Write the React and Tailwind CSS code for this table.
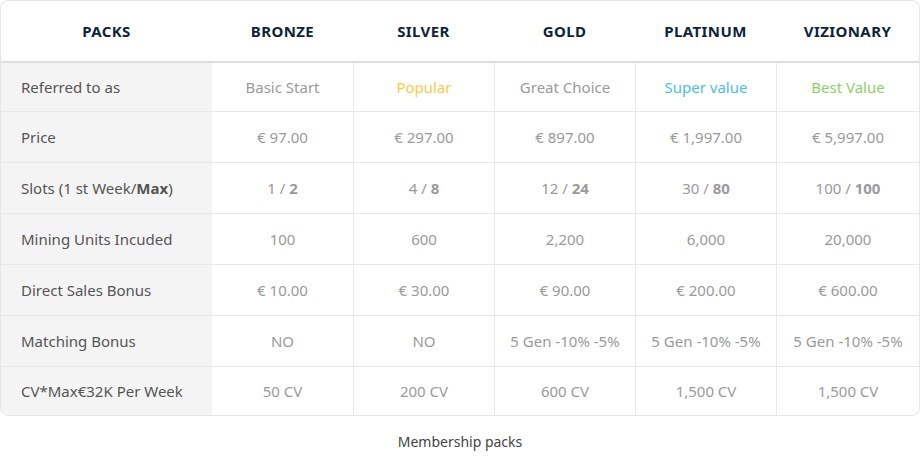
import React from "react";

const headers = ["PACKS", "BRONZE", "SILVER", "GOLD", "PLATINUM", "VIZIONARY"];

const B = ({ children }) => <span className="font-bold">{children}</span>;

const rows = [
  {
    label: "Referred to as",
    cells: [
      <span className="text-[#9a9a9a]">Basic Start</span>,
      <span className="text-[#fcc94b]">Popular</span>,
      <span className="text-[#9a9a9a]">Great Choice</span>,
      <span className="text-[#4cc0ea]">Super value</span>,
      <span className="text-[#8cd168]">Best Value</span>,
    ],
  },
  { label: "Price", cells: ["€ 97.00", "€ 297.00", "€ 897.00", "€ 1,997.00", "€ 5,997.00"] },
  {
    label: (
      <span>
        Slots (1 st Week/<B>Max</B>)
      </span>
    ),
    cells: [
      <span>1 / <B>2</B></span>,
      <span>4 / <B>8</B></span>,
      <span>12 / <B>24</B></span>,
      <span>30 / <B>80</B></span>,
      <span>100 / <B>100</B></span>,
    ],
  },
  { label: "Mining Units Incuded", cells: ["100", "600", "2,200", "6,000", "20,000"] },
  { label: "Direct Sales Bonus", cells: ["€ 10.00", "€ 30.00", "€ 90.00", "€ 200.00", "€ 600.00"] },
  { label: "Matching Bonus", cells: ["NO", "NO", "5 Gen -10% -5%", "5 Gen -10% -5%", "5 Gen -10% -5%"] },
  { label: "CV*Max€32K Per Week", cells: ["50 CV", "200 CV", "600 CV", "1,500 CV", "1,500 CV"], last: true },
];

export default function App() {
  return (
    <div
      className="w-[920px] h-[466px] bg-white"
      style={{ fontFamily: '"Noto Sans", "Open Sans", Arial, sans-serif' }}
    >
      <div className="border border-[#e6e6e6] rounded-[8px] overflow-hidden bg-white">
        <div className="grid grid-cols-[211px_141px_141px_141px_141px_1fr] h-[60px] border-b-2 border-[#dedede] box-content">
          {headers.map((h, i) => (
            <div
              key={i}
              className="flex items-center justify-center text-[15px] font-bold tracking-[0.4px] text-[#0e2338]"
            >
              {h}
            </div>
          ))}
        </div>
        {rows.map((r, ri) => (
          <div
            key={ri}
            className={`grid grid-cols-[211px_141px_141px_141px_141px_1fr] ${
              r.last ? "h-[48px]" : ri === 0 ? "h-[49px] border-b border-[#e8e8e8]" : "h-[51px] border-b border-[#e8e8e8]"
            }`}
          >
            <div className="bg-[#f4f4f4] flex items-center pl-5 text-[15px] text-[#555]">
              {r.label}
            </div>
            {r.cells.map((c, ci) => (
              <div
                key={ci}
                className={`flex items-center justify-center text-[15px] text-[#9a9a9a] ${
                  ci > 0 ? "border-l border-[#e8e8e8]" : ""
                }`}
              >
                {c}
              </div>
            ))}
          </div>
        ))}
      </div>
      <div className="text-center text-[14px] text-[#444] mt-[15px]">Membership packs</div>
    </div>
  );
}
